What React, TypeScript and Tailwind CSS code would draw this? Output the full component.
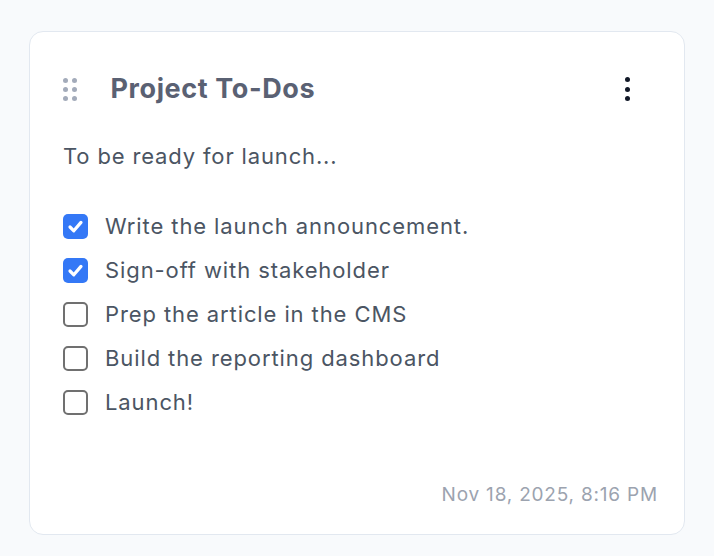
import React from "react";

const items = [
  { label: "Write the launch announcement.", done: true },
  { label: "Sign-off with stakeholder", done: true },
  { label: "Prep the article in the CMS", done: false },
  { label: "Build the reporting dashboard", done: false },
  { label: "Launch!", done: false },
];

function Box({ done }: { done: boolean }) {
  if (done) {
    return (
      <span className="flex h-[25px] w-[25px] shrink-0 items-center justify-center rounded-[5px] bg-[#3478f6]">
        <svg width="25" height="25" viewBox="0 0 25 25" fill="none">
          <path d="M7 13 L10.8 16.8 L18 8.4" stroke="white" strokeWidth="3.2" strokeLinecap="round" strokeLinejoin="round" />
        </svg>
      </span>
    );
  }
  return <span className="h-[25px] w-[25px] shrink-0 rounded-[5px] border-2 border-[#707070] bg-white" />;
}

export default function App() {
  return (
    <div className="min-h-[556px] w-[714px] bg-[#f8fafc] px-[29px] pt-[31px] pb-[21px]" style={{ fontFamily: "Inter, 'Noto Sans', sans-serif" }}>
      <div className="h-[504px] rounded-[14px] border border-[#e2e8f0] bg-white pl-[33px] pr-[26px] flex flex-col">
        <div className="mt-[37px] flex h-[40px] items-center">
          <div className="grid grid-cols-2 gap-x-[3.5px] gap-y-[4px]">
            {Array.from({ length: 6 }).map((_, i) => (
              <span key={i} className="h-[5px] w-[5px] rounded-full bg-[#a3abba]" />
            ))}
          </div>
          <h1 className="ml-[34px] text-[27px] font-bold text-[#5a6173] tracking-[0.6px]">Project To-Dos</h1>
          <div className="ml-auto mr-[28px] flex flex-col gap-[4.5px]">
            <span className="h-[5px] w-[5px] rounded-full bg-[#111827]" />
            <span className="h-[5px] w-[5px] rounded-full bg-[#111827]" />
            <span className="h-[5px] w-[5px] rounded-full bg-[#111827]" />
          </div>
        </div>
        <p className="mt-[32px] text-[22px] leading-[30px] tracking-[0.85px] text-[#4b5563]">To be ready for launch...</p>
        <ul className="mt-[33px] flex flex-col">
          {items.map((it) => (
            <li key={it.label} className="flex h-[44px] items-center gap-[17px]">
              <Box done={it.done} />
              <span className="text-[22px] tracking-[0.9px] text-[#4b5563]">{it.label}</span>
            </li>
          ))}
        </ul>
        <div className="mt-auto mb-[25px] text-right text-[19px] leading-[28px] tracking-[0.8px] text-[#9ca3af]">Nov 18, 2025, 8:16 PM</div>
      </div>
    </div>
  );
}
